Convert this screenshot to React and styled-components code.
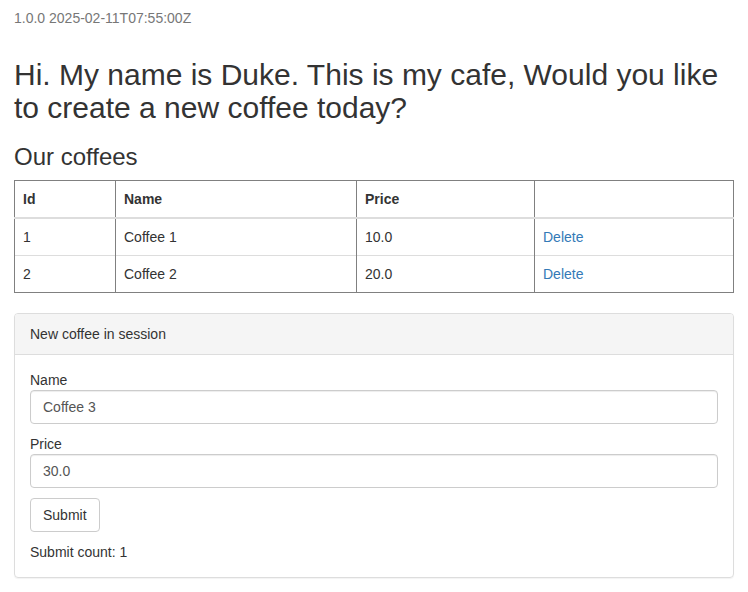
import React from "react";
import styled, { createGlobalStyle } from "styled-components";

const Global = createGlobalStyle`
  * { box-sizing: border-box; }
  html, body { margin: 0; padding: 0; background: #fff; }
  body {
    font-family: "Liberation Sans", Arial, Helvetica, sans-serif;
    font-size: 14px;
    line-height: 1.42857143;
    color: #333;
  }
`;

const Page = styled.div`
  padding: 0 14px;
`;

const Version = styled.div`
  margin-top: 8px;
  font-size: 14px;
  line-height: 20px;
  color: #777;
`;

const Title = styled.h2`
  margin: 30px 0 20px;
  font-size: 30px;
  font-weight: 500;
  line-height: 1.1;
`;

const Subtitle = styled.h3`
  margin: 0 0 10px;
  font-size: 24px;
  font-weight: 500;
  line-height: 1.1;
`;

const Table = styled.table`
  width: 100%;
  border-collapse: collapse;
  border: 1px solid #808080;
  margin-bottom: 20px;
`;

const Th = styled.th`
  text-align: left;
  font-weight: bold;
  padding: 8px;
  line-height: 20px;
  border-left: 1px solid #808080;
  border-right: 1px solid #808080;
  border-bottom: 2px solid #ddd;
  width: ${(p) => p.$w || "auto"};
`;

const Td = styled.td`
  padding: 8px;
  line-height: 20px;
  border-left: 1px solid #808080;
  border-right: 1px solid #808080;
  border-top: 1px solid #ddd;
`;

const Link = styled.a`
  color: #337ab7;
  text-decoration: none;
  cursor: pointer;
`;

const Panel = styled.div`
  border: 1px solid #ddd;
  border-radius: 4px;
  box-shadow: 0 1px 1px rgba(0, 0, 0, 0.05);
  margin-bottom: 20px;
`;

const PanelHeading = styled.div`
  padding: 10px 15px;
  background: #f5f5f5;
  border-bottom: 1px solid #ddd;
  border-radius: 3px 3px 0 0;
`;

const PanelBody = styled.form`
  padding: 15px;
  display: flex;
  flex-direction: column;
  align-items: flex-start;
  gap: 10px;
`;

const Field = styled.div`
  display: flex;
  flex-direction: column;
  width: 100%;
`;

const Label = styled.label`
  font-weight: normal;
  line-height: 20px;
`;

const Input = styled.input`
  display: block;
  width: 100%;
  height: 34px;
  padding: 6px 12px;
  font-family: inherit;
  font-size: 14px;
  line-height: 1.42857143;
  color: #555;
  background: #fff;
  border: 1px solid #ccc;
  border-radius: 4px;
  box-shadow: inset 0 1px 1px rgba(0, 0, 0, 0.075);
  outline: none;
`;

const Button = styled.button`
  height: 34px;
  padding: 6px 12px;
  font-family: inherit;
  font-size: 14px;
  line-height: 1.42857143;
  color: #333;
  background: #fff;
  border: 1px solid #ccc;
  border-radius: 4px;
  cursor: pointer;
`;

const Count = styled.div`
  line-height: 20px;
`;

const coffees = [
  { id: 1, name: "Coffee 1", price: "10.0" },
  { id: 2, name: "Coffee 2", price: "20.0" },
];

export default function App() {
  return (
    <Page>
      <Global />
      <Version>1.0.0 2025-02-11T07:55:00Z</Version>
      <Title>
        Hi. My name is Duke. This is my cafe, Would you like to create a new
        coffee today?
      </Title>
      <Subtitle>Our coffees</Subtitle>
      <Table>
        <thead>
          <tr>
            <Th $w="101px">Id</Th>
            <Th $w="241px">Name</Th>
            <Th $w="178px">Price</Th>
            <Th />
          </tr>
        </thead>
        <tbody>
          {coffees.map((c) => (
            <tr key={c.id}>
              <Td>{c.id}</Td>
              <Td>{c.name}</Td>
              <Td>{c.price}</Td>
              <Td>
                <Link>Delete</Link>
              </Td>
            </tr>
          ))}
        </tbody>
      </Table>
      <Panel>
        <PanelHeading>New coffee in session</PanelHeading>
        <PanelBody onSubmit={(e) => e.preventDefault()}>
          <Field>
            <Label>Name</Label>
            <Input defaultValue="Coffee 3" />
          </Field>
          <Field>
            <Label>Price</Label>
            <Input defaultValue="30.0" />
          </Field>
          <Button type="submit">Submit</Button>
          <Count>Submit count: 1</Count>
        </PanelBody>
      </Panel>
    </Page>
  );
}
